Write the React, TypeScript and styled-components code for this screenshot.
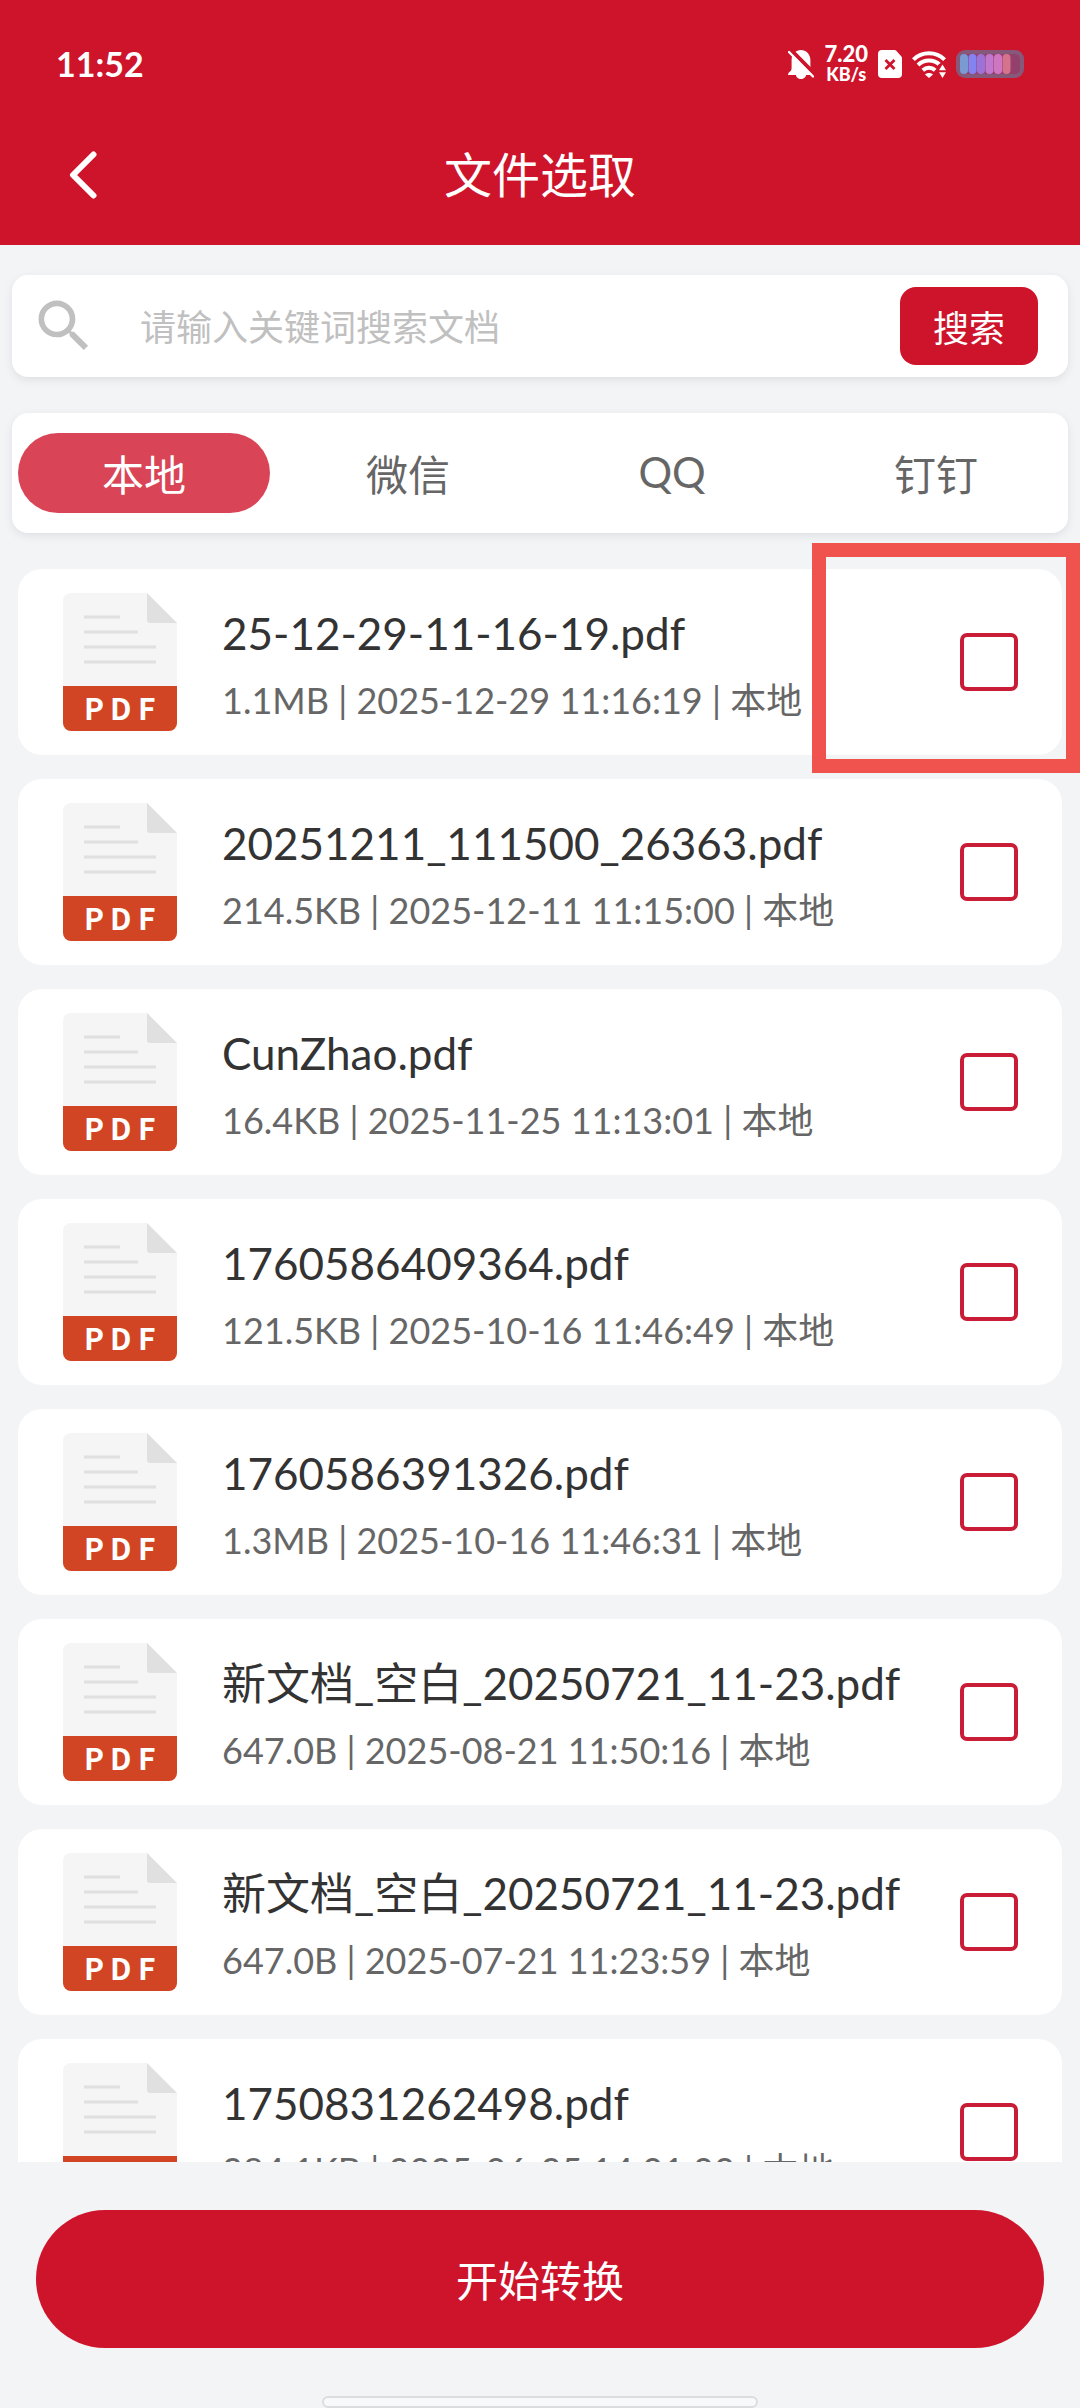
import React from "react";
import styled, { createGlobalStyle } from "styled-components";

const RED = "#ce142b";
const BG = "#f3f4f6";

const GlobalStyle = createGlobalStyle`
  * { box-sizing: border-box; }
  body {
    margin: 0;
    background: ${BG};
    font-family: Lato, "Noto Sans CJK SC", sans-serif;
  }
  button, input { font-family: inherit; }
`;

const Screen = styled.div`
  display: flex;
  flex-direction: column;
  height: 100vh;
  overflow: hidden;
  background: ${BG};
`;

const Header = styled.header`
  flex: none;
  background: ${RED};
  color: #fff;
`;

const StatusBar = styled.div`
  display: flex;
  align-items: center;
  justify-content: space-between;
  height: 104px;
  padding: 24px 56px 0;
`;

const Clock = styled.time`
  font-size: 34px;
  font-weight: 700;
  line-height: 40px;
`;

const StatusIcons = styled.div`
  display: flex;
  align-items: center;
  gap: 10px;
`;

const Speed = styled.div`
  display: flex;
  flex-direction: column;
  align-items: center;
  font-weight: 900;
`;

const SpeedValue = styled.span`
  font-size: 22px;
  line-height: 20px;
`;

const SpeedUnit = styled.span`
  font-size: 18px;
  line-height: 20px;
`;

const TitleBar = styled.div`
  display: grid;
  grid-template-columns: 1fr auto 1fr;
  align-items: center;
  height: 141px;
  padding: 0 54px;
`;

const BackButton = styled.button`
  display: flex;
  align-items: center;
  justify-content: center;
  width: 58px;
  height: 72px;
  padding: 0;
  border: 0;
  background: none;
`;

const Title = styled.h1`
  margin: 0;
  font-size: 48px;
  font-weight: 400;
  line-height: 72px;
`;

const Panel = styled.div`
  flex: none;
  margin: 0 12px;
  border-radius: 16px;
  background: #fff;
  box-shadow: 0 3px 8px rgba(40, 60, 80, 0.1);
`;

const SearchPanel = styled(Panel).attrs({ as: "form" })`
  display: flex;
  align-items: center;
  height: 102px;
  margin-top: 30px;
  padding: 0 30px 0 18px;
`;

const SearchInput = styled.input`
  flex: 1;
  min-width: 0;
  height: 80px;
  margin-left: 42px;
  padding: 2px 0 0;
  border: 0;
  outline: 0;
  background: none;
  color: #333;
  font-size: 36px;
  &::placeholder {
    color: #c0c0c0;
    opacity: 1;
  }
`;

const SearchButton = styled.button`
  width: 138px;
  height: 78px;
  padding: 0;
  border: 0;
  border-radius: 16px;
  background: ${RED};
  color: #fff;
  font-size: 36px;
`;

const Tabs = styled(Panel)`
  display: flex;
  height: 120px;
  margin-top: 36px;
  padding: 20px 0;
`;

const Tab = styled.button<{ $active: boolean }>`
  flex: 1;
  margin: 0 6px;
  padding: 0 0 2px;
  border: 0;
  border-radius: 40px;
  background: ${(p) => (p.$active ? "#d94556" : "transparent")};
  color: ${(p) => (p.$active ? "#fff" : "#666")};
  font-size: 42px;
`;

const FileList = styled.ul`
  display: flex;
  flex: 1;
  flex-direction: column;
  gap: 24px;
  min-height: 0;
  margin: 0;
  padding: 36px 18px 0;
  overflow: hidden auto;
  scrollbar-width: none;
  list-style: none;
`;

const FileCard = styled.li`
  position: relative;
  flex: none;
`;

const FileLabel = styled.label`
  display: flex;
  align-items: center;
  height: 186px;
  padding: 24px 44px 24px 45px;
  border-radius: 24px;
  background: #fff;
`;

const FileText = styled.span`
  display: flex;
  flex: 1;
  flex-direction: column;
  align-self: flex-start;
  min-width: 0;
  padding: 0 12px 0 45px;
`;

const FileName = styled.span`
  overflow: hidden;
  color: #333;
  font-size: 44px;
  line-height: 80px;
  text-overflow: ellipsis;
  white-space: nowrap;
`;

const FileMeta = styled.span`
  color: #666;
  font-size: 36px;
  line-height: 54px;
  white-space: nowrap;
`;

const CheckBox = styled.input`
  flex: none;
  width: 58px;
  height: 58px;
  margin: 0;
  border: 4px solid #c81c37;
  border-radius: 7px;
  background: #fff;
  appearance: none;
  &:checked { background: ${RED}; }
`;

const Highlight = styled.div`
  position: absolute;
  top: -26px;
  right: -18px;
  width: 268px;
  height: 230px;
  border: 14px solid #f0524d;
  pointer-events: none;
`;

const Footer = styled.footer`
  display: flex;
  flex: none;
  flex-direction: column;
  align-items: center;
  gap: 48px;
  padding: 48px 36px 0;
`;

const ConvertButton = styled.button`
  width: 100%;
  height: 138px;
  padding: 0 0 2px;
  border: 0;
  border-radius: 69px;
  background: ${RED};
  color: #fff;
  font-size: 42px;
`;

const HomeIndicator = styled.div`
  width: 436px;
  height: 12px;
  border: 2px solid #dcdddf;
  border-radius: 6px;
  background: #f8f9fa;
`;

const BellOffIcon = () => (
  <svg width="26" height="29" viewBox="0 0 26 29" aria-hidden="true">
    <path
      fill="#fff"
      d="M13 0C8 0 3.600 4 3.600 10v7.500c0 2.500-.6 3.300-1.600 4C.8 22.300 0 23.400 0 25h26c0-1.600-.8-2.700-2-3.500-1-.7-1.600-1.500-1.600-4V10C22.400 4 18 0 13 0zM8 25h10c0 2.200-2.200 4-5 4s-5-1.800-5-4z"
    />
    <path d="M3 0l25 25.500" stroke={RED} strokeWidth="4" />
    <path d="M1 2l24 24.500" stroke="#fff" strokeWidth="2.400" strokeLinecap="round" />
  </svg>
);

const SimIcon = () => (
  <svg width="24" height="28" viewBox="0 0 24 28" aria-hidden="true">
    <path fill="#fff" d="M4 0h12.500c.7 0 1.300.3 1.800.8l4.900 5.400c.5.500.8 1.100.8 1.800v16a4 4 0 0 1-4 4H4a4 4 0 0 1-4-4V4a4 4 0 0 1 4-4z" />
    <path d="M7.500 10l9 9m0-9l-9 9" stroke={RED} strokeWidth="2.800" />
  </svg>
);

const WifiIcon = () => (
  <svg width="34" height="28" viewBox="0 0 34 28" fill="none" aria-hidden="true">
    <g stroke="#fff" strokeWidth="4">
      <path d="M1.400 9.600C10 1.200 24 1.200 32.600 9.600" />
      <path d="M6 15c6.200-5.900 15.800-5.900 22 0" />
      <path d="M10.800 20.200c3.600-3.300 8.800-3.300 12.400 0" />
    </g>
    <path fill="#fff" d="M13 24.500c2-2 6-2 8 0L17 28z" />
    <path fill={RED} d="M26 15l4.500-3.500L34 14v14h-8z" />
    <path fill="#fff" d="M30.500 14.500l3.500 5.800h-7zM30.500 28l3.500-5.800h-7z" />
  </svg>
);

const CELLS = ["#7a9bd2", "#8384f2", "#9c72d8", "#c178cc", "#cf76c0", "#d5728c"];

const BatteryIcon = () => (
  <svg width="68" height="28" viewBox="0 0 68 28" aria-hidden="true">
    <rect x="0" y="0" width="68" height="28" rx="9" fill="#86597a" />
    <rect x="4" y="4" width="60" height="20" rx="5" fill="#93406c" />
    {CELLS.map((color, i) => (
      <rect key={color} x={4 + i * 8.500} y="4" width="8" height="20" rx="4" fill={color} />
    ))}
  </svg>
);

const BackIcon = () => (
  <svg width="28" height="48" viewBox="0 0 28 48" fill="none" aria-hidden="true">
    <path d="M24.500 3.500L4 24l20.500 20.500" stroke="#fff" strokeWidth="6" strokeLinecap="round" strokeLinejoin="round" />
  </svg>
);

const SearchIcon = () => (
  <svg width="68" height="68" viewBox="0 0 24 24" aria-hidden="true">
    <path
      fill="#c0c0c0"
      d="M15.500 14h-.79l-.28-.27A6.471 6.471 0 0 0 16 9.500 6.500 6.500 0 1 0 9.500 16c1.610 0 3.090-.59 4.230-1.570l.27.28v.79l5 4.990L20.490 19l-4.990-5zm-6 0C7.010 14 5 11.990 5 9.500S7.010 5 9.500 5 14 7.010 14 9.500 11.990 14 9.500 14z"
    />
  </svg>
);

const PdfIcon = () => (
  <svg width="114" height="138" viewBox="0 0 114 138" aria-hidden="true">
    <path fill="#f5f5f5" d="M8 0h76l30 30v63H0V8a8 8 0 0 1 8-8z" />
    <path fill="#e0e0e0" d="M84 0l30 30H87a3 3 0 0 1-3-3z" />
    <path d="M21 24h36M21 39h54M21 54h72M21 69h72" stroke="#e0e0e0" strokeWidth="3" />
    <path fill="#d14424" d="M0 93h114v37a8 8 0 0 1-8 8H8a8 8 0 0 1-8-8z" />
    <text x="21 47 75" y="127" fill="#fff" fontFamily="Noto Sans CJK SC, sans-serif" fontSize="30" fontWeight="700">
      PDF
    </text>
  </svg>
);

const TABS = ["本地", "微信", "QQ", "钉钉"];

const FILES = [
  { name: "25-12-29-11-16-19.pdf", meta: "1.1MB | 2025-12-29 11:16:19 | 本地", highlighted: true },
  { name: "20251211_111500_26363.pdf", meta: "214.5KB | 2025-12-11 11:15:00 | 本地" },
  { name: "CunZhao.pdf", meta: "16.4KB | 2025-11-25 11:13:01 | 本地" },
  { name: "1760586409364.pdf", meta: "121.5KB | 2025-10-16 11:46:49 | 本地" },
  { name: "1760586391326.pdf", meta: "1.3MB | 2025-10-16 11:46:31 | 本地" },
  { name: "新文档_空白_20250721_11-23.pdf", meta: "647.0B | 2025-08-21 11:50:16 | 本地" },
  { name: "新文档_空白_20250721_11-23.pdf", meta: "647.0B | 2025-07-21 11:23:59 | 本地" },
  { name: "1750831262498.pdf", meta: "284.1KB | 2025-06-25 14:01:02 | 本地" },
];

export default function App() {
  const [tab, setTab] = React.useState(TABS[0]);

  return (
    <Screen>
      <GlobalStyle />
      <Header>
        <StatusBar>
          <Clock>11:52</Clock>
          <StatusIcons>
            <BellOffIcon />
            <Speed>
              <SpeedValue>7.20</SpeedValue>
              <SpeedUnit>KB/s</SpeedUnit>
            </Speed>
            <SimIcon />
            <WifiIcon />
            <BatteryIcon />
          </StatusIcons>
        </StatusBar>
        <TitleBar>
          <BackButton type="button" aria-label="返回">
            <BackIcon />
          </BackButton>
          <Title>文件选取</Title>
        </TitleBar>
      </Header>

      <SearchPanel>
        <SearchIcon />
        <SearchInput type="text" aria-label="搜索文档" placeholder="请输入关键词搜索文档" />
        <SearchButton type="button">搜索</SearchButton>
      </SearchPanel>

      <Tabs role="tablist">
        {TABS.map((name) => (
          <Tab key={name} type="button" role="tab" aria-selected={name === tab} $active={name === tab} onClick={() => setTab(name)}>
            {name}
          </Tab>
        ))}
      </Tabs>

      <FileList>
        {FILES.map((file) => (
          <FileCard key={file.meta}>
            <FileLabel>
              <PdfIcon />
              <FileText>
                <FileName>{file.name}</FileName>
                <FileMeta>{file.meta}</FileMeta>
              </FileText>
              <CheckBox type="checkbox" />
            </FileLabel>
            {file.highlighted && <Highlight />}
          </FileCard>
        ))}
      </FileList>

      <Footer>
        <ConvertButton type="button">开始转换</ConvertButton>
        <HomeIndicator />
      </Footer>
    </Screen>
  );
}
